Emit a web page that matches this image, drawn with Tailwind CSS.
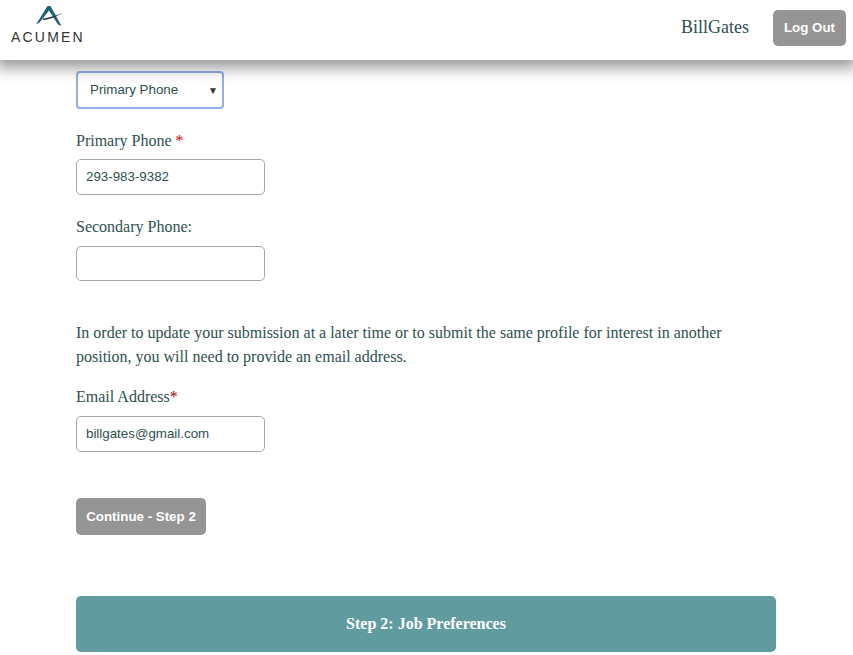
<!doctype html>
<html lang="en">
<head>
    <meta charset="utf-8">
    <meta name="viewport" content="width=device-width, initial-scale=1">
    <script src="https://cdn.jsdelivr.net/npm/@tailwindcss/browser@4"></script>
</head>
<body class="bg-white h-[655px] overflow-hidden font-['Liberation_Serif',serif] text-base text-[#2f4f4f]">

    <!-- Header -->
    <header class="relative z-10 h-[60px] bg-white flex items-center justify-between shadow-[0_4px_14px_4px_rgba(0,0,0,0.4)]">
        <div class="self-start mt-[5px] ml-[11px]">
            <svg class="block ml-6 w-[28px] h-[22px]" viewBox="0 0 28 22">
                <path d="M12.5 1 L15.5 1 L26.5 21 L23 19.5 L14 5.5 L4.5 17.5 L1 19.5 Z" fill="#1c5f7f"/>
                <path d="M8 13.5 C14 13 22 10 28 8 C22 11 14 15 8 15 Z" fill="#1f2a30"/>
            </svg>
            <span class="block mt-[3px] font-['Liberation_Sans',sans-serif] text-sm leading-[15px] tracking-[2.2px] text-[#333] whitespace-nowrap">ACUMEN</span>
        </div>
        <div class="flex items-center mr-[7px]">
            <span class="text-lg mr-6 -mt-[6px]">BillGates</span>
            <button class="h-9 w-[73px] rounded-[5px] bg-[#959595] text-white font-['Liberation_Sans',sans-serif] font-bold text-[13.33px] -mt-[4px]">Log Out</button>
        </div>
    </header>

    <!-- Form -->
    <main class="w-[700px] ml-[76px] pt-[11px]">
        <div class="w-[148px] h-[38px] pl-[14px] pr-[4px] flex items-center justify-between bg-white rounded-[4px] border-2 border-[#8fb0e8] font-['Liberation_Sans',sans-serif] text-[13.33px]">
            <span class="-ml-[2px]">Primary Phone</span>
            <span class="text-[10px] text-[#333]">▼</span>
        </div>

        <label class="block mt-[22px] leading-[20px]">Primary Phone <span class="text-[#e00000]">*</span></label>
        <input type="text" value="293-983-9382" class="block mt-2 w-[189px] h-9 px-[9px] pb-px bg-white rounded-[5px] border border-[#a6a6a6] font-['Liberation_Sans',sans-serif] text-[13.33px]">

        <label class="block mt-[22px] leading-[20px]">Secondary Phone:</label>
        <input type="text" class="block mt-[9px] w-[189px] h-[35px] px-[9px] bg-white rounded-[5px] border border-[#a6a6a6] font-['Liberation_Sans',sans-serif] text-[13.33px]">

        <p class="mt-[40px] leading-6">In order to update your submission at a later time or to submit the same profile for interest in another position, you will need to provide an email address.</p>

        <label class="block mt-[18px] leading-[20px]">Email Address<span class="text-[#a00000]">*</span></label>
        <input type="text" value="billgates@gmail.com" class="block mt-[9px] w-[189px] h-9 px-[9px] pb-px bg-white rounded-[5px] border border-[#a6a6a6] font-['Liberation_Sans',sans-serif] text-[13.33px]">

        <button class="block mt-[46px] w-[130px] h-[37px] rounded-[5px] bg-[#959595] text-white font-['Liberation_Sans',sans-serif] font-bold text-[13.33px]">Continue - Step 2</button>

        <div class="mt-[61px] h-14 flex items-center justify-center rounded-[5px] bg-[#609c9f] text-white font-bold text-base">Step 2: Job Preferences</div>
    </main>
</body>
</html>
